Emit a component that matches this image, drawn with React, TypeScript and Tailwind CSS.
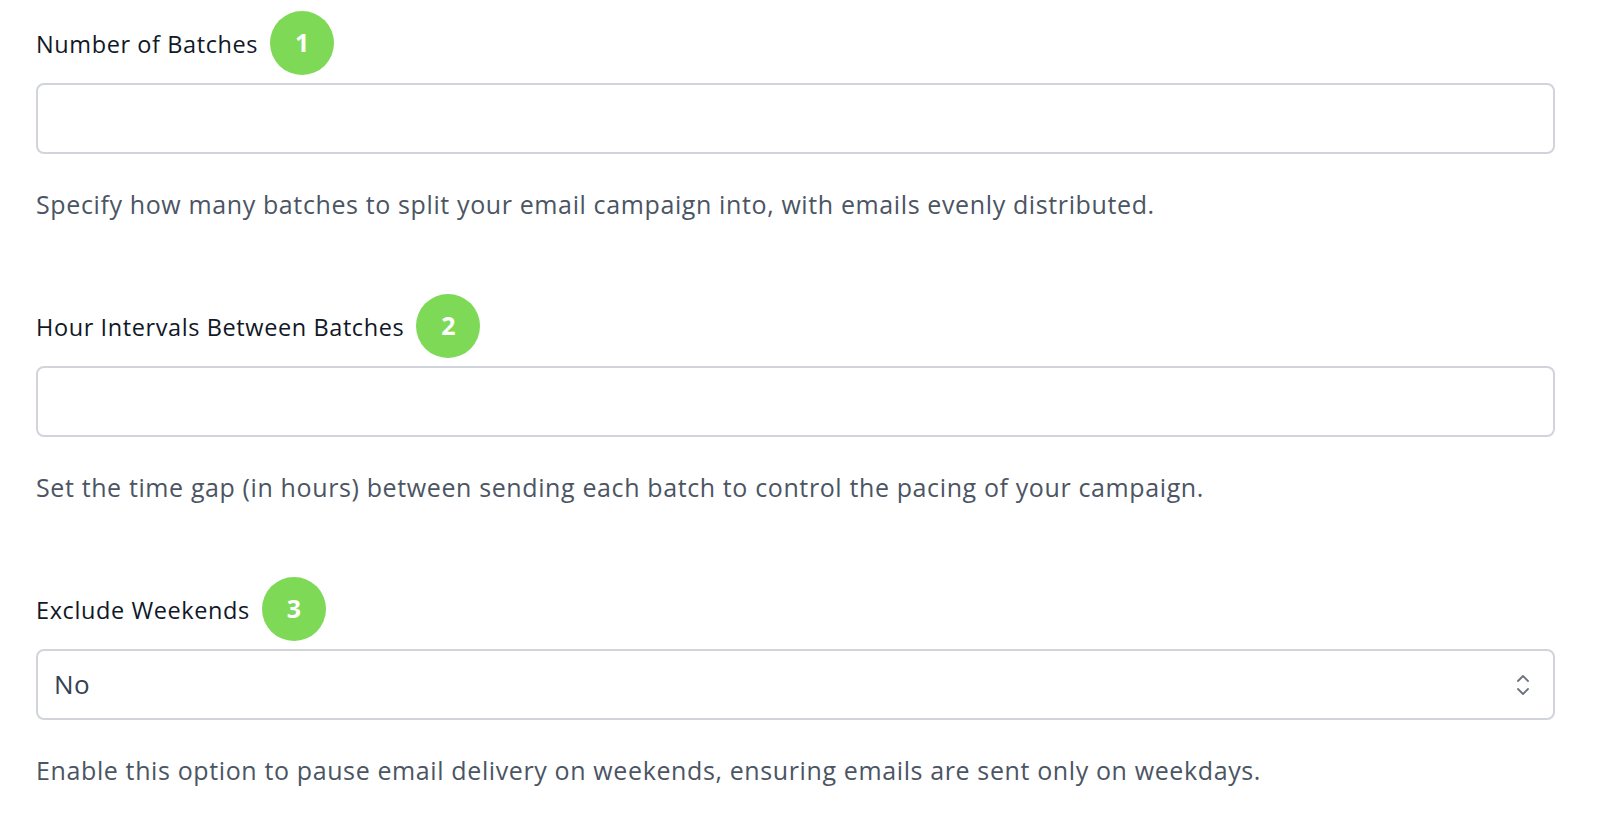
import React from "react";

function Badge({ n }: { n: number }) {
  return (
    <div className="flex h-16 w-16 shrink-0 items-center justify-center rounded-full bg-[#7ed957] font-['Open_Sans',sans-serif] text-[25px] font-bold text-white">
      {n}
    </div>
  );
}

function Section({
  label,
  n,
  help,
  select,
}: {
  label: string;
  n: number;
  help: string;
  select?: string;
}) {
  return (
    <div className="flex flex-col">
      <div className="flex h-16 items-center gap-3">
        <span className="mt-[4px] text-[23.5px] font-medium tracking-[0.6px] text-[#111827]">{label}</span>
        <Badge n={n} />
      </div>
      {select ? (
        <div className="mt-2 flex h-[71px] items-center justify-between rounded-lg border-2 border-[#d1d5db] bg-white pl-4 pr-[23px]">
          <span className="text-[26px] tracking-[0.3px] text-[#374151]">{select}</span>
          <svg width="14" height="22" viewBox="0 0 14 22" fill="none" stroke="#6b7280" strokeWidth="1.8" strokeLinecap="round" strokeLinejoin="round">
            <path d="M2 7 L7 2 L12 7" />
            <path d="M2 15 L7 20 L12 15" />
          </svg>
        </div>
      ) : (
        <div className="mt-2 h-[71px] rounded-lg border-2 border-[#d1d5db] bg-white" />
      )}
      <p className="mt-[34px] text-[25px] leading-[32px] tracking-[0.62px] text-[#4b5563]">{help}</p>
    </div>
  );
}

export default function App() {
  return (
    <div className="min-h-[820px] bg-white pl-[36px] pr-[49px] pt-[11px] font-['Open_Sans',sans-serif]">
      <div className="flex flex-col gap-[74px]">
        <Section
          label="Number of Batches"
          n={1}
          help="Specify how many batches to split your email campaign into, with emails evenly distributed."
        />
        <Section
          label="Hour Intervals Between Batches"
          n={2}
          help="Set the time gap (in hours) between sending each batch to control the pacing of your campaign."
        />
        <Section
          label="Exclude Weekends"
          n={3}
          select="No"
          help="Enable this option to pause email delivery on weekends, ensuring emails are sent only on weekdays."
        />
      </div>
    </div>
  );
}
